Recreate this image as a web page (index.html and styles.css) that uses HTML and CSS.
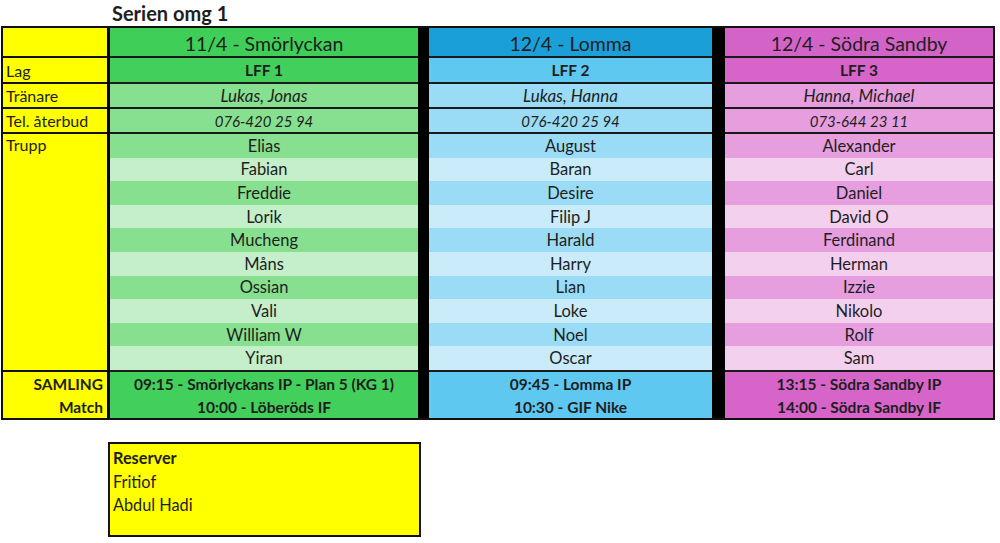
FILE: index.html
```html
<!DOCTYPE html>
<html lang="sv">
<head>
<meta charset="utf-8">
<title>Serien omg 1</title>
<link rel="stylesheet" href="styles.css">
</head>
<body>
<div class="page">
  <div class="title">Serien omg 1</div>
  <div class="sheet">
    <div class="col labels">
      <div class="cell head"></div>
      <div class="cell lag">Lag</div>
      <div class="cell small">Tränare</div>
      <div class="cell small">Tel. återbud</div>
      <div class="cell trupp">Trupp</div>
      <div class="cell bottom">
        <div class="line">SAMLING</div>
        <div class="line">Match</div>
      </div>
    </div>
    <div class="col team green">
      <div class="cell head">11/4 - Smörlyckan</div>
      <div class="cell lag">LFF 1</div>
      <div class="cell small it">Lukas, Jonas</div>
      <div class="cell small it phone">076-420 25 94</div>
      <div class="list">
        <div class="row">Elias</div>
        <div class="row">Fabian</div>
        <div class="row">Freddie</div>
        <div class="row">Lorik</div>
        <div class="row">Mucheng</div>
        <div class="row">Måns</div>
        <div class="row">Ossian</div>
        <div class="row">Vali</div>
        <div class="row">William W</div>
        <div class="row">Yiran</div>
      </div>
      <div class="cell bottom">
        <div class="line">09:15 - Smörlyckans IP - Plan 5 (KG 1)</div>
        <div class="line">10:00 - Löberöds IF</div>
      </div>
    </div>
    <div class="col team blue">
      <div class="cell head">12/4 - Lomma</div>
      <div class="cell lag">LFF 2</div>
      <div class="cell small it">Lukas, Hanna</div>
      <div class="cell small it phone">076-420 25 94</div>
      <div class="list">
        <div class="row">August</div>
        <div class="row">Baran</div>
        <div class="row">Desire</div>
        <div class="row">Filip J</div>
        <div class="row">Harald</div>
        <div class="row">Harry</div>
        <div class="row">Lian</div>
        <div class="row">Loke</div>
        <div class="row">Noel</div>
        <div class="row">Oscar</div>
      </div>
      <div class="cell bottom">
        <div class="line">09:45 - Lomma IP</div>
        <div class="line">10:30 - GIF Nike</div>
      </div>
    </div>
    <div class="col team pink">
      <div class="cell head">12/4 - Södra Sandby</div>
      <div class="cell lag">LFF 3</div>
      <div class="cell small it">Hanna, Michael</div>
      <div class="cell small it phone">073-644 23 11</div>
      <div class="list">
        <div class="row">Alexander</div>
        <div class="row">Carl</div>
        <div class="row">Daniel</div>
        <div class="row">David O</div>
        <div class="row">Ferdinand</div>
        <div class="row">Herman</div>
        <div class="row">Izzie</div>
        <div class="row">Nikolo</div>
        <div class="row">Rolf</div>
        <div class="row">Sam</div>
      </div>
      <div class="cell bottom">
        <div class="line">13:15 - Södra Sandby IP</div>
        <div class="line">14:00 - Södra Sandby IF</div>
      </div>
    </div>
  </div>
  <div class="reserve">
    <div class="rline bold">Reserver</div>
    <div class="rline">Fritiof</div>
    <div class="rline">Abdul Hadi</div>
  </div>
</div>
</body>
</html>
```

FILE: styles.css
```css
html, body {
  margin: 0;
  padding: 0;
  background: #ffffff;
}

body {
  font-family: Lato, "Open Sans", "Liberation Sans", sans-serif;
  color: #1e1e1e;
}

.page {
  width: 1000px;
  height: 543px;
  overflow: hidden;
}

.title {
  height: 26px;
  padding-left: 112px;
  font-weight: bold;
  font-size: 20px;
  line-height: 27px;
  box-sizing: border-box;
}

.sheet {
  display: flex;
  width: fit-content;
  margin-left: 1px;
  background: #000;
  border: 2px solid #111;
}

.col {
  display: flex;
  flex-direction: column;
  gap: 2px;
}

.labels {
  width: 104px;
  background: #111;
}

.labels .cell {
  background: #ffff00;
  justify-content: flex-start;
  padding-left: 3px;
  font-size: 16px;
}

.green { width: 308px; margin-left: 3px; --head: #3fcf58; --lag: #43cf5b; --light: #87e08f; --alt: #c4efca; background: #1a1a1a; }
.blue  { width: 283px; margin-left: 11px; --head: #1b9fd9; --lag: #5fc8f1; --light: #9adcf6; --alt: #caecfa; background: #1a1a1a; }
.pink  { width: 268px; margin-left: 13px; --head: #d463c8; --lag: #d764c9; --light: #e69ede; --alt: #f4d0ef; background: #1a1a1a; }

.cell {
  display: flex;
  align-items: center;
  justify-content: center;
  box-sizing: border-box;
  font-size: 16.5px;
}

.head {
  height: 28px;
  font-size: 19.5px;
  padding-top: 2px;
}

.lag {
  height: 24px;
}

.small {
  height: 23px;
}

.team .head { background: var(--head); }
.team .lag { background: var(--lag); font-weight: bold; font-size: 15.5px; }
.team .small { background: var(--light); }
.it { font-style: italic; font-size: 17px; }
.it.phone { font-size: 15px; }

.labels .lag,
.labels .small {
  font-size: 16px;
  font-weight: normal;
}

.trupp {
  height: 236px;
  align-items: flex-start !important;
  padding-top: 1px;
}

.list {
  display: flex;
  flex-direction: column;
  height: 236px;
}

.row {
  flex: 1;
  display: flex;
  align-items: center;
  justify-content: center;
  font-size: 16.5px;
  background: var(--light);
}

.row:nth-child(even) {
  background: var(--alt);
}

.bottom {
  height: 46px;
  flex-direction: column;
  align-items: stretch;
  font-weight: bold;
  font-size: 15.5px;
}

.team .bottom { background: var(--lag); }

.bottom .line {
  flex: 1;
  display: flex;
  align-items: center;
  justify-content: center;
}

.labels .bottom {
  padding-left: 0;
  padding-right: 4px;
  font-size: 15.5px;
  font-weight: bold;
}

.labels .bottom .line {
  justify-content: flex-end;
}

.reserve {
  margin-top: 22px;
  margin-left: 108px;
  width: 313px;
  height: 95px;
  box-sizing: border-box;
  background: #ffff00;
  border: 2px solid #111;
  padding: 2px 0 0 3px;
}

.rline {
  height: 23.5px;
  line-height: 23.5px;
  font-size: 16.3px;
}

.rline.bold {
  font-weight: bold;
}
```
